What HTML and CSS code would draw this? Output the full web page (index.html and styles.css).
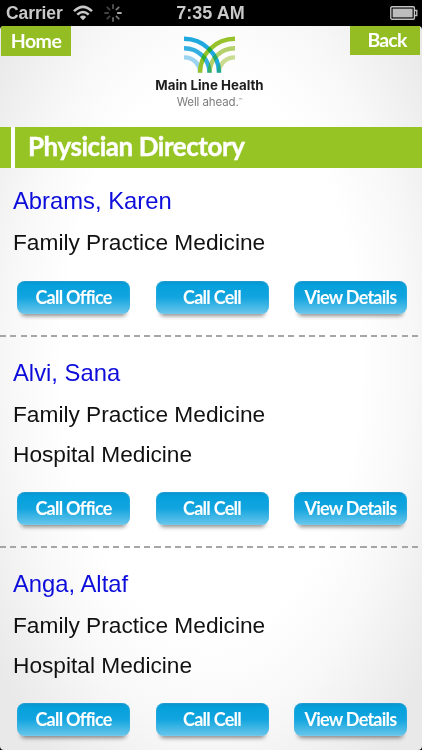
FILE: index.html
```html
<!DOCTYPE html>
<html lang="en">
<head>
  <meta charset="UTF-8">
  <meta name="viewport" content="width=device-width, initial-scale=1.0">
  <title>Physician Directory</title>
  <link rel="stylesheet" href="styles.css">
</head>
<body>
  <div class="status-bar">
    <div class="status-left">
      <span class="carrier">Carrier</span>
      <svg class="wifi" width="20" height="16" viewBox="0 0 20 16" fill="none" stroke="#c9c9c9" stroke-width="2.5">
        <path d="M1 6.2Q10-2.4 19 6.2"/>
        <path d="M4.3 9.7Q10 4.3 15.7 9.7"/>
        <path d="M10 15.2L6.8 12Q10 9.2 13.2 12Z" fill="#c9c9c9" stroke="none"/>
      </svg>
      <svg class="spinner" width="18" height="18" viewBox="-9 -9 18 18" stroke="#888" stroke-width="1.8" stroke-linecap="round">
        <path d="M0-4.8V-8" stroke="#555"/>
        <path d="M3.4-3.4L5.7-5.7" stroke="#777"/>
        <path d="M4.8 0H8" stroke="#aaa"/>
        <path d="M3.4 3.4L5.7 5.7" stroke="#777"/>
        <path d="M0 4.8V8" stroke="#666"/>
        <path d="M-3.4 3.4L-5.7 5.7" stroke="#444"/>
        <path d="M-4.8 0H-8" stroke="#444"/>
        <path d="M-3.4-3.4L-5.7-5.7" stroke="#444"/>
      </svg>
    </div>
    <span class="time">7:35 AM</span>
    <svg class="battery" width="28" height="14" viewBox="0 0 28 14">
      <rect x=".8" y=".8" width="23.6" height="12.4" rx="1.2" fill="none" stroke="#c4c4c4" stroke-width="1.4"/>
      <rect x="2.6" y="2.6" width="20" height="8.8" fill="#bdbdbd"/>
      <path d="M24.5 4.5H26.8V9.5H24.5" fill="none" stroke="#c4c4c4" stroke-width="1.3"/>
    </svg>
  </div>

  <div class="page">
    <header class="header">
      <a class="nav-button home">Home</a>
      <div class="logo">
        <svg width="51" height="37" viewBox="0 0 51 37" fill="none" stroke-width="4.4">
          <g stroke="#97c22b">
            <path class="band" d="M51 21.4A15.5 15.3 0 0 0 35 36.7" stroke="#c9dc92"/>
            <path class="band" d="M51 12.2A25.3 24.5 0 0 0 25.5 36.7" stroke="#b4d068"/>
            <path class="band" d="M51 2.8A35 33.9 0 0 0 16 36.7"/>
          </g>
          <g stroke="#1fa9df">
            <path class="band" d="M0 21.4A15.5 15.3 0 0 1 16 36.7" stroke="#9bd3f0"/>
            <path class="band" d="M0 12.2A25.3 24.5 0 0 1 25.5 36.7" stroke="#35afe2"/>
            <path class="band" d="M0 2.8A35 33.9 0 0 1 35 36.7"/>
          </g>
        </svg>
        <div class="logo-name">Main Line Health</div>
        <div class="logo-tagline">Well ahead.<span class="tm">™</span></div>
      </div>
      <a class="nav-button back">Back</a>
    </header>

    <h1 class="title"><span>Physician Directory</span></h1>

    <div class="physician">
      <h2>Abrams, Karen</h2>
      <p>Family Practice Medicine</p>
      <div class="buttons">
        <a class="button"><span>Call Office</span></a>
        <a class="button"><span>Call Cell</span></a>
        <a class="button"><span>View Details</span></a>
      </div>
    </div>

    <div class="physician">
      <h2>Alvi, Sana</h2>
      <p>Family Practice Medicine</p>
      <p>Hospital Medicine</p>
      <div class="buttons">
        <a class="button"><span>Call Office</span></a>
        <a class="button"><span>Call Cell</span></a>
        <a class="button"><span>View Details</span></a>
      </div>
    </div>

    <div class="physician">
      <h2>Anga, Altaf</h2>
      <p>Family Practice Medicine</p>
      <p>Hospital Medicine</p>
      <div class="buttons">
        <a class="button"><span>Call Office</span></a>
        <a class="button"><span>Call Cell</span></a>
        <a class="button"><span>View Details</span></a>
      </div>
    </div>
  </div>
</body>
</html>
```

FILE: styles.css
```css
* {
  box-sizing: border-box;
}
body {
  margin: 0;
  height: 750px;
  overflow: hidden;
  background: #000;
  font-family: "Liberation Sans", Arial, sans-serif;
}
.status-bar {
  display: grid;
  grid-template-columns: 1fr auto 1fr;
  align-items: center;
  height: 26px;
  padding: 0 4px 0 6px;
  color: #c9c9c9;
  font-size: 18px;
  font-weight: bold;
}
.status-left {
  display: flex;
  align-items: center;
}
.carrier {
  font-size: 17.5px;
  letter-spacing: -0.1px;
}
.time {
  margin-left: -3px;
}
.wifi {
  margin-left: 10px;
}
.spinner {
  margin-left: 11px;
}
.battery {
  justify-self: end;
}
.page {
  height: 724px;
  overflow: hidden;
  border-radius: 4px;
  background: radial-gradient(ellipse 270px 500px at 50% 46%, #fff 55%, #f8f8f8 74%, #e9e9e9 100%);
}
.header {
  display: flex;
  justify-content: space-between;
  align-items: flex-start;
  height: 101px;
  padding: 0 2px 0 1px;
}
.nav-button {
  width: 70px;
  height: 29.5px;
  background: #93bd22;
  color: #fff;
  font-family: Lato, sans-serif;
  font-size: 19.5px;
  font-weight: bold;
  letter-spacing: -0.8px;
  line-height: 29px;
  text-align: center;
}
.home {
  letter-spacing: -0.5px;
}
.back {
  height: 28.5px;
  padding-left: 4px;
  line-height: 28px;
}
.logo {
  padding: 10px 2px 0 0;
  text-align: center;
}
.logo svg {
  display: block;
  margin: 0 auto;
}
.band {
  mix-blend-mode: darken;
}
.logo-name {
  margin-top: 4px;
  color: #1d1d1d;
  font-family: Inter, sans-serif;
  font-size: 13.3px;
  font-weight: bold;
  line-height: 16px;
}
.logo-tagline {
  color: #7d7d7d;
  font-family: Inter, sans-serif;
  font-size: 11.5px;
  letter-spacing: -0.1px;
  line-height: 15px;
}
.tm {
  font-size: 6px;
  vertical-align: 3px;
}
.title {
  display: flex;
  height: 41px;
  margin: 0;
  background: linear-gradient(to right, #97c425 11px, #fff 11px, #fff 15px, #97c425 15px);
  padding-left: 28px;
  color: #fff;
  font-family: Lato, sans-serif;
  font-size: 26px;
  font-weight: bold;
  letter-spacing: -0.45px;
  line-height: 39px;
  -webkit-text-stroke: 0.4px #fff;
}
.physician {
  height: 211px;
  padding: 15px 13px 0;
  background: repeating-linear-gradient(to right, #a6a6a6 0, #a6a6a6 6px, transparent 6px, transparent 10.3px) 0 100% / 100% 2px no-repeat;
}
.title + .physician {
  height: 169px;
  padding-top: 12px;
}
.physician:last-child {
  background: none;
}
.physician h2 {
  margin: 0 0 1px;
  color: #0d0ddb;
  font-size: 23.8px;
  font-weight: normal;
  line-height: 41px;
}
.physician p {
  margin: 0;
  color: #111;
  font-size: 22.7px;
  line-height: 40px;
}
.buttons {
  display: flex;
  gap: 25.5px;
  margin-top: 18px;
  padding-left: 4px;
}
.title + .physician .buttons {
  margin-top: 19px;
}
.button {
  width: 113px;
  height: 33px;
  border-radius: 8px;
  background: linear-gradient(to bottom, #0c8fc9, #05a0dc 12%, #12a5df 50%, #62c3ea 95%, #8dd3ef);
  box-shadow: 0 6px 4px -4px rgba(0, 0, 0, 0.45), inset 0 0 2px #4db5df;
  color: #fff;
  font-family: Lato, sans-serif;
  font-size: 18px;
  font-weight: bold;
  letter-spacing: -0.75px;
  line-height: 32px;
  text-align: center;
  white-space: nowrap;
}
```
